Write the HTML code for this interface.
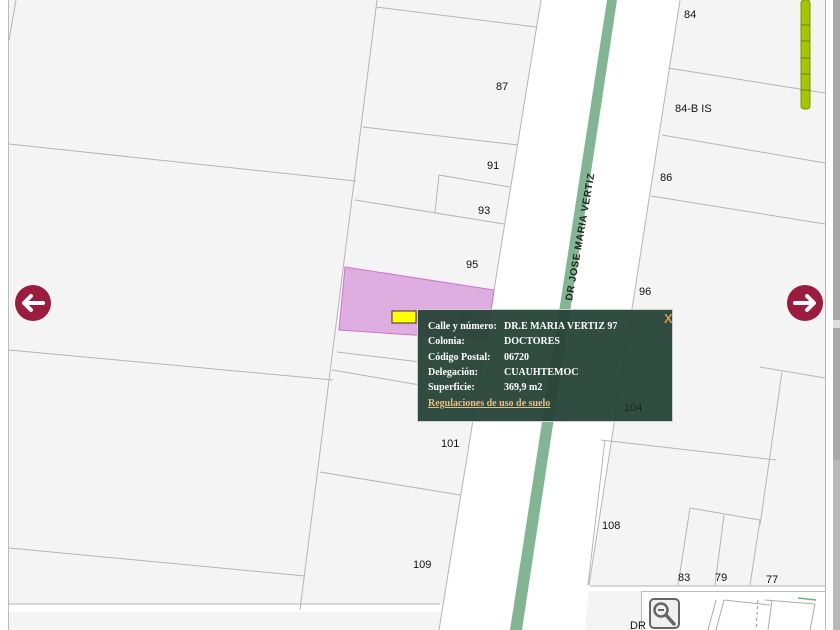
<!DOCTYPE html>
<html><head><meta charset="utf-8"><style>
html,body{margin:0;padding:0;width:840px;height:630px;overflow:hidden;background:#fff;position:relative;font-family:"Liberation Sans",sans-serif}
.pop{position:absolute;left:417px;top:309px;width:256px;height:113px;background:rgba(38,66,54,0.95);border:1px solid #cfcfcf;box-sizing:border-box;font-family:"Liberation Serif",serif;font-weight:bold;font-size:10px;color:#fff}
.pop .r{position:absolute;left:10px}
.pop .v{position:absolute;left:86px}
.lbl{position:absolute;font-size:11px;color:#111}
</style></head><body>
<svg width="840" height="630" style="position:absolute;left:0;top:0">
<rect x="9" y="0" width="816" height="630" fill="#f4f4f4"/>
<line x1="8.5" y1="0" x2="8.5" y2="630" stroke="#bbb"/>
<polygon points="541,0 680,0 589,585 585,630 439,630" fill="#fff"/>
<rect x="9" y="604" width="440" height="8" fill="#fff"/>
<rect x="589" y="586" width="236" height="5" fill="#fff"/>
<polygon points="607,0 617,0 522,630 510,630" fill="#82b592"/>
<g stroke="#b5b5b5" stroke-width="1" fill="none">
<line x1="541" y1="0" x2="439" y2="630"/>
<line x1="680" y1="0" x2="589" y2="585"/>
<line x1="377" y1="0" x2="300" y2="610"/>
<line x1="16" y1="0" x2="9" y2="40"/>
<line x1="9" y1="144" x2="356" y2="181"/>
<line x1="9" y1="350" x2="333" y2="380"/>
<line x1="9" y1="548" x2="305" y2="576"/>
<line x1="376" y1="7" x2="536" y2="27"/>
<line x1="363" y1="127" x2="518" y2="145"/>
<line x1="439" y1="175" x2="510" y2="187"/>
<line x1="439" y1="175" x2="435" y2="212"/>
<line x1="355" y1="200" x2="504" y2="224"/>
<line x1="337" y1="352" x2="420" y2="362"/>
<line x1="332" y1="370" x2="420" y2="385"/>
<line x1="320" y1="472" x2="460" y2="495"/>
<line x1="9" y1="604" x2="440" y2="604"/>
<line x1="668" y1="68" x2="825" y2="93"/>
<line x1="662" y1="135" x2="825" y2="163"/>
<line x1="651" y1="196" x2="825" y2="224"/>
<line x1="760" y1="367" x2="825" y2="378"/>
<line x1="782" y1="372" x2="760" y2="525"/>
<line x1="601" y1="440" x2="776" y2="460"/>
<line x1="605" y1="440" x2="588" y2="585"/>
<line x1="590" y1="586" x2="825" y2="586"/>
<line x1="690" y1="508" x2="760" y2="520"/>
<line x1="690" y1="508" x2="678" y2="585"/>
<line x1="724" y1="515" x2="715" y2="585"/>
<line x1="760" y1="520" x2="750" y2="585"/>
<line x1="825.5" y1="0" x2="825.5" y2="630"/>
</g>
<polygon points="345,267 494,290 487,340 339,330" fill="#dfaee0" stroke="#d070d0" stroke-width="1"/>
<rect x="826" y="0" width="7" height="630" fill="#fff"/>
<rect x="833" y="0" width="7" height="630" fill="#a8a8a8"/>
<rect x="833" y="320" width="7" height="8" fill="#ddd"/>
<rect x="833" y="460" width="7" height="170" fill="#b8b8b8"/>
<rect x="801" y="0" width="9" height="109" rx="3" fill="#a8c400" stroke="#7f9400"/>
<g stroke="#6e8200"><line x1="801" y1="25" x2="810" y2="25"/><line x1="801" y1="41" x2="810" y2="41"/><line x1="801" y1="58" x2="810" y2="58"/><line x1="801" y1="74" x2="810" y2="74"/><line x1="801" y1="90" x2="810" y2="90"/></g>
<circle cx="33" cy="303" r="18" fill="#9b1c3f"/>
<path d="M43 303 H24 M31 296 L24 303 L31 310" stroke="#fff" stroke-width="4" fill="none" stroke-linecap="round" stroke-linejoin="round"/>
<circle cx="805" cy="303" r="18" fill="#9b1c3f"/>
<path d="M795 303 H814 M807 296 L814 303 L807 310" stroke="#fff" stroke-width="4" fill="none" stroke-linecap="round" stroke-linejoin="round"/>
<rect x="392" y="311" width="24" height="12" fill="#ffff00" stroke="#333"/>
<rect x="641.5" y="591.5" width="184" height="40" fill="#fff" stroke="#bbb"/>
<g stroke="#aaa" fill="none"><line x1="716" y1="600" x2="708" y2="630"/><line x1="724" y1="600" x2="716" y2="630"/><line x1="724" y1="600" x2="770" y2="605"/><line x1="772" y1="600" x2="768" y2="630"/><line x1="765" y1="600" x2="815" y2="604"/><line x1="815" y1="604" x2="810" y2="630"/></g>
<line x1="758" y1="600" x2="756" y2="630" stroke="#6bb07c" stroke-dasharray="3,3"/>
<line x1="798" y1="598" x2="816" y2="600" stroke="#6bb07c" stroke-width="1.5"/>
<rect x="650" y="599" width="29" height="29" rx="4" fill="#f0f0f0" stroke="#666" stroke-width="2"/>
<circle cx="661" cy="610" r="6.5" fill="none" stroke="#666" stroke-width="2.5"/>
<line x1="658" y1="610" x2="664" y2="610" stroke="#666" stroke-width="2"/>
<line x1="666" y1="615" x2="674" y2="624" stroke="#666" stroke-width="3.5" stroke-linecap="round"/>
<text x="0" y="0" font-family="Liberation Sans" font-size="10" font-weight="bold" fill="#222" transform="translate(572,301) rotate(-80)" letter-spacing="0.6">DR JOSE MARIA VERTIZ</text>
</svg>
<div class="lbl" style="left:496px;top:81px">87</div>
<div class="lbl" style="left:487px;top:160px">91</div>
<div class="lbl" style="left:478px;top:205px">93</div>
<div class="lbl" style="left:466px;top:259px">95</div>
<div class="lbl" style="left:459px;top:313px">97</div>
<div class="lbl" style="left:684px;top:9px">84</div>
<div class="lbl" style="left:675px;top:103px">84-B IS</div>
<div class="lbl" style="left:660px;top:172px">86</div>
<div class="lbl" style="left:639px;top:286px">96</div>
<div class="lbl" style="left:441px;top:438px">101</div>
<div class="lbl" style="left:413px;top:559px">109</div>
<div class="lbl" style="left:602px;top:520px">108</div>
<div class="lbl" style="left:678px;top:572px">83</div>
<div class="lbl" style="left:715px;top:572px">79</div>
<div class="lbl" style="left:766px;top:574px">77</div>
<div class="lbl" style="left:630px;top:620px">DR</div>
<div class="pop">
<div style="position:absolute;left:246px;top:1px;color:#d39a4a;font-size:13px;font-family:'Liberation Sans',sans-serif">X</div>
<div class="r" style="top:11px">Calle y número:</div><div class="v" style="top:11px">DR.E MARIA VERTIZ 97</div>
<div class="r" style="top:26px">Colonia:</div><div class="v" style="top:26px">DOCTORES</div>
<div class="r" style="top:42px">Código Postal:</div><div class="v" style="top:42px">06720</div>
<div class="r" style="top:57px">Delegación:</div><div class="v" style="top:57px">CUAUHTEMOC</div>
<div class="r" style="top:72px">Superficie:</div><div class="v" style="top:72px">369,9 m2</div>
<div class="r" style="top:88px;color:#e6c08a;text-decoration:underline">Regulaciones de uso de suelo</div>
<div style="position:absolute;left:206px;top:92px;font-family:'Liberation Sans',sans-serif;font-weight:normal;font-size:11px;color:#1a2a22">104</div>
</div>
</body></html>
